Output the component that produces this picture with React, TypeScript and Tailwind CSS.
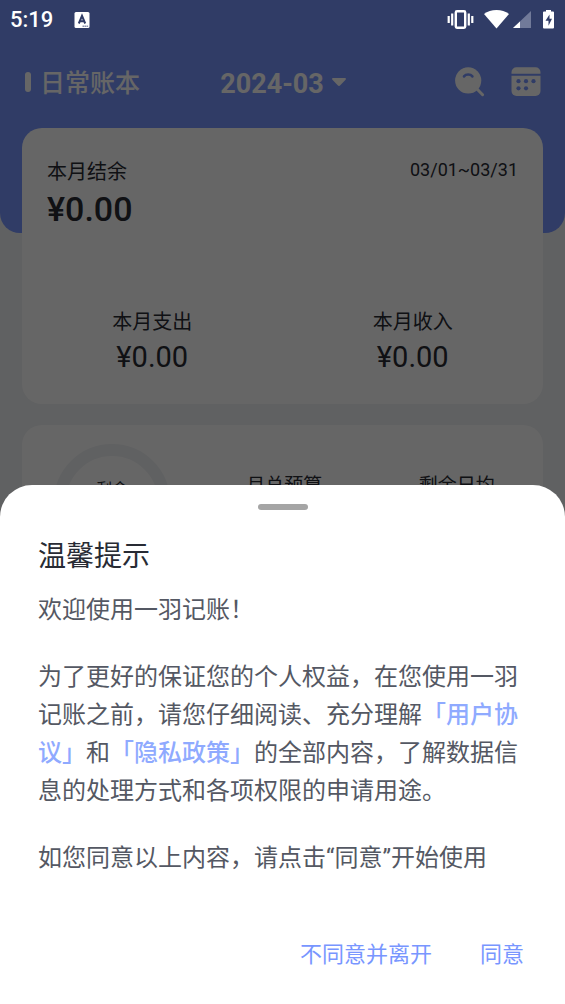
import React from 'react';

function StatusBar() {
  return (
    <div className="flex h-10 items-center justify-between pl-[10px] pr-[11px] text-white">
      <div className="flex items-center gap-[21px]">
        <span className="text-[22px] leading-10 font-medium">5:19</span>
        <svg className="h-4 w-4" viewBox="0 0 16 16" aria-hidden="true">
          <rect x="0.5" width="15" height="16" rx="1.5" fill="#fff" />
          <path d="M4.8 11.500 8 3.800l3.200 7.700M5.800 9.200h4.400" fill="none" stroke="#303c66" strokeWidth="2" />
          <path d="M8.500 14.200h6" stroke="#8b93ad" strokeWidth="1.400" strokeDasharray="1.6 .4" />
        </svg>
      </div>
      <div className="flex items-center">
        <svg className="h-5 w-[27px]" viewBox="0 0 27 20" aria-hidden="true">
          <rect x="8.800" y="1.200" width="9.400" height="16.600" rx="1.200" fill="none" stroke="#fff" strokeWidth="2.400" />
          <path d="M5.200 3.500v12M21.800 3.500v12" stroke="#fff" strokeWidth="2.200" />
          <path d="M1.700 6v7M25.300 6v7" stroke="#fff" strokeWidth="2.200" />
        </svg>
        <svg className="ml-[10px] h-5 w-[25px]" viewBox="0 0 25 20" aria-hidden="true">
          <path d="M12.500 18.500 0 4C3.400 1.300 7.700 0 12.500 0S21.600 1.300 25 4Z" fill="#fff" />
        </svg>
        <svg className="ml-1 h-5 w-[18px]" viewBox="0 0 18 20" aria-hidden="true">
          <path d="M18 1v17H0Z" fill="#717a99" />
          <path d="M7 11.400V18H0Z" fill="#fff" />
        </svg>
        <svg className="ml-3 h-5 w-[11px]" viewBox="0 0 11 20" aria-hidden="true">
          <path d="M3 0h5v1.500h2a1 1 0 0 1 1 1V17.500a1 1 0 0 1-1 1H1a1 1 0 0 1-1-1V2.500a1 1 0 0 1 1-1h2Z" fill="#fff" />
          <path d="M6.500 4.500 2.500 10.800h3v5L9 8.800H6.500Z" fill="#303c66" />
        </svg>
      </div>
    </div>
  );
}

function SearchIcon() {
  return (
    <svg className="h-[30px] w-[30px]" viewBox="0 0 30 30" aria-hidden="true">
      <circle cx="13.200" cy="13.400" r="13.100" fill="currentColor" />
      <path d="m22 22 5.600 5.700" stroke="currentColor" strokeWidth="3" strokeLinecap="round" />
      <path d="M9 9.400c2-2.500 6.400-2.500 8.400 0" fill="none" stroke="#7896ff" strokeWidth="2.600" strokeLinecap="round" />
    </svg>
  );
}

function CalendarIcon() {
  return (
    <svg className="h-[30px] w-[30px]" viewBox="0 0 30 30" aria-hidden="true">
      <path d="M0.500 6.700V5.200a5 5 0 0 1 5-5h19a5 5 0 0 1 5 5v1.500Z" fill="currentColor" />
      <path d="M0.500 8.800h29V24a5 5 0 0 1-5 5h-19a5 5 0 0 1-5-5Z" fill="currentColor" />
      <g fill="#7896ff">
        <circle cx="7.500" cy="14.200" r="2.100" />
        <circle cx="15" cy="14.200" r="2.100" />
        <circle cx="22.500" cy="14.200" r="2.100" />
        <circle cx="7.500" cy="21.300" r="2.100" />
        <circle cx="15" cy="21.300" r="2.100" />
      </g>
    </svg>
  );
}

function Total({ label, value }: { label: string; value: string }) {
  return (
    <div className="flex flex-col items-center">
      <span className="text-xl leading-8">{label}</span>
      <span className="text-[29px] leading-[38px]">{value}</span>
    </div>
  );
}

function Ledger() {
  return (
    <div className="h-full bg-[#f0f2f5] text-[#282b34]">
      <header className="h-[233px] rounded-b-[20px] bg-[#7896ff] pt-10 text-white">
        <div className="grid h-[84px] grid-cols-[1fr_auto_1fr] items-center pr-[24px] pl-[25px]">
          <button type="button" className="flex items-center gap-[9px]">
            <span className="h-5 w-[6px] rounded-full bg-white" />
            <span className="pt-[3px] text-[25px] leading-10 font-medium">日常账本</span>
          </button>
          <button type="button" className="flex items-center gap-2">
            <span className="pt-[3px] text-[27px] leading-10 font-bold">2024-03</span>
            <svg className="h-2 w-[14px]" viewBox="0 0 14 8" aria-hidden="true">
              <path d="M1.200 0h11.600c1 0 1.500 1 .8 1.700L8.300 7.300c-.7.8-1.900.8-2.600 0L.4 1.700C-.3 1 .2 0 1.200 0Z" fill="currentColor" />
            </svg>
          </button>
          <div className="flex justify-end gap-[26px]">
            <button type="button" aria-label="搜索"><SearchIcon /></button>
            <button type="button" aria-label="日历"><CalendarIcon /></button>
          </div>
        </div>
      </header>
      <main className="-mt-[105px] flex flex-col gap-[21px] px-[22px]">
        <section className="rounded-[20px] bg-white pt-7 pb-7">
          <div className="flex items-start justify-between px-[25px]">
            <div className="flex flex-col">
              <h2 className="text-xl leading-8">本月结余</h2>
              <span className="text-[34px] leading-[42px] font-medium">¥0.00</span>
            </div>
            <span className="text-lg leading-7">03/01~03/31</span>
          </div>
          <div className="mt-[76px] grid grid-cols-2">
            <Total label="本月支出" value="¥0.00" />
            <Total label="本月收入" value="¥0.00" />
          </div>
        </section>
        <section className="flex items-start rounded-[20px] bg-white pt-[19px] pb-5 pl-8">
          <div className="flex h-[116px] w-[116px] shrink-0 justify-center rounded-full border-[12px] border-[#f0f2f5] pt-[22px]">
            <span className="text-base leading-6">剩余</span>
          </div>
          <div className="ml-7 grid flex-1 grid-cols-2 pt-[26px] text-center text-[19px] leading-8">
            <span>月总预算</span>
            <span>剩余日均</span>
          </div>
        </section>
      </main>
    </div>
  );
}

function ConsentSheet() {
  return (
    <div
      role="dialog"
      aria-labelledby="sheet-title"
      className="flex w-full flex-col rounded-t-[32px] bg-white px-[38px] pt-[19px] pb-[29px] text-[#545863]"
    >
      <span className="h-[6px] w-[50px] self-center rounded-full bg-[#a5a5a5]" />
      <h1 id="sheet-title" className="mt-[27px] text-[28px] leading-10 text-[#282b34]">温馨提示</h1>
      <div className="mt-[14px] flex flex-col gap-[29px] text-2xl leading-[38px]">
        <p>欢迎使用一羽记账！</p>
        <p>
          为了更好的保证您的个人权益，在您使用一羽记账之前，请您仔细阅读、充分理解
          <a href="#terms" className="font-medium text-[#8faaff]">「用户协议」</a>
          和
          <a href="#privacy" className="font-medium text-[#8faaff]">「隐私政策」</a>
          的全部内容，了解数据信息的处理方式和各项权限的申请用途。
        </p>
        <p>如您同意以上内容，请点击“同意”开始使用</p>
      </div>
      <div className="mt-[58px] flex justify-end gap-12 pr-[3px] text-[22px] leading-10 text-[#7896ff]">
        <button type="button">不同意并离开</button>
        <button type="button">同意</button>
      </div>
    </div>
  );
}

export default function App() {
  return (
    <div
      lang="zh-CN"
      className="relative flex min-h-screen flex-col overflow-hidden bg-[#f0f2f5] font-['Roboto','Noto_Sans_CJK_SC',sans-serif]"
    >
      <Ledger />
      <div className="absolute inset-0 flex flex-col justify-between bg-black/60">
        <StatusBar />
        <ConsentSheet />
      </div>
    </div>
  );
}
